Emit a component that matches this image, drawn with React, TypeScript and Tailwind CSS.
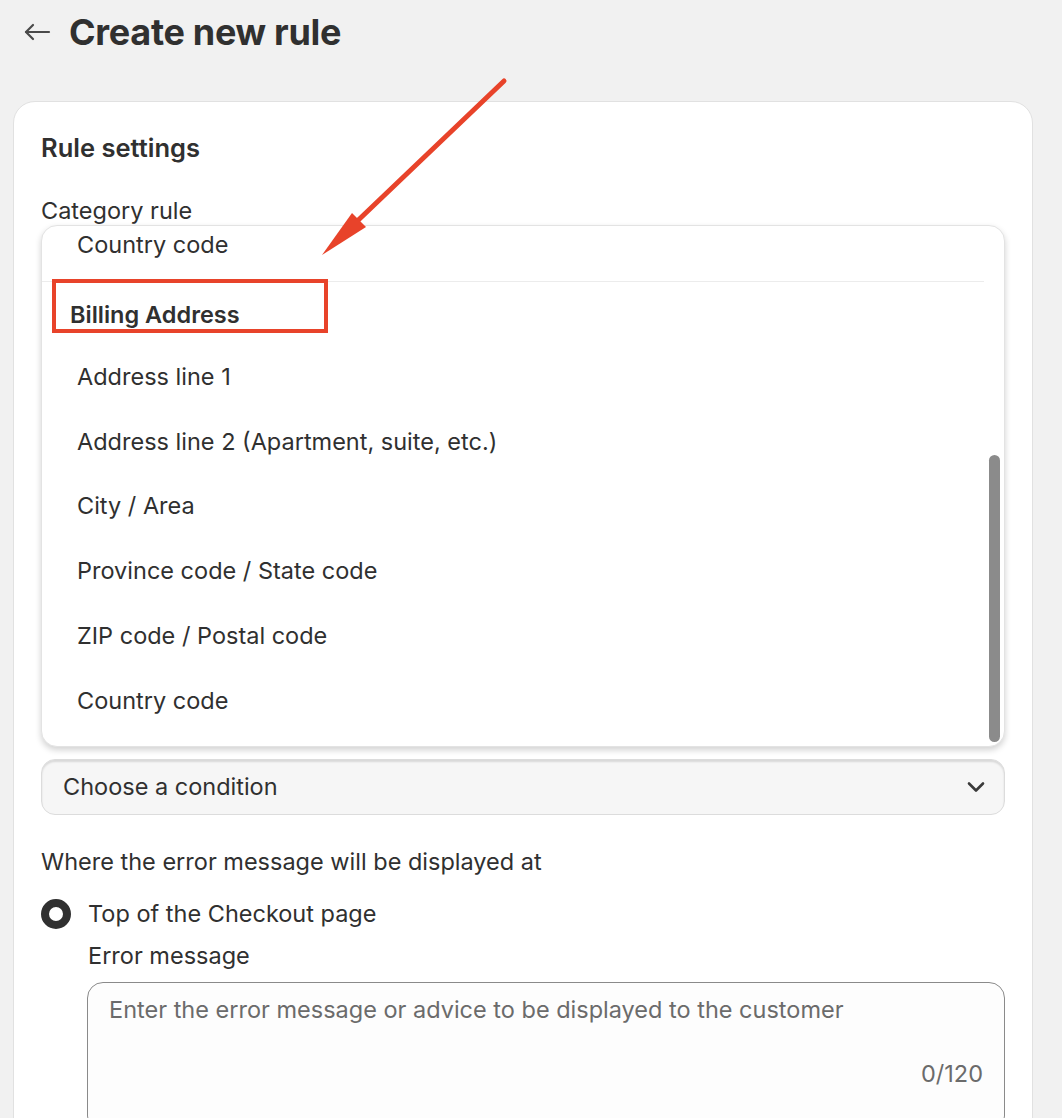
import React from "react";

const items = [
  "Address line 1",
  "Address line 2 (Apartment, suite, etc.)",
  "City / Area",
  "Province code / State code",
  "ZIP code / Postal code",
  "Country code",
];

function BackArrow() {
  return (
    <svg width="28" height="20" viewBox="0 0 28 20" fill="none" stroke="#4a4a4a" strokeWidth="2.2" strokeLinecap="round" strokeLinejoin="round">
      <path d="M26 10H3" />
      <path d="M10 3L3 10l7 7" />
    </svg>
  );
}

function Chevron() {
  return (
    <svg width="20" height="12" viewBox="0 0 20 12" fill="none" stroke="#3a3a3a" strokeWidth="2.6" strokeLinecap="round" strokeLinejoin="round">
      <path d="M3 2.5l7 7 7-7" />
    </svg>
  );
}

export default function App() {
  return (
    <div
      className="relative min-h-[1118px] w-[1062px] overflow-hidden bg-[#f1f1f1] text-[#303030]"
      style={{ fontFamily: "Inter, 'Noto Sans', sans-serif" }}
    >
      <div className="flex h-[64px] items-center gap-[18px] pl-[23px]">
        <BackArrow />
        <h1 className="text-[36px] font-bold leading-none tracking-[-0.3px]">Create new rule</h1>
      </div>

      <div className="ml-[13px] mt-[37px] w-[1020px] rounded-t-[22px] border border-[#e1e1e1] bg-white px-[27px] pt-[27px] pb-[40px]">
        <h2 className="h-[35px] text-[25.5px] font-semibold leading-[37px]">Rule settings</h2>
        <div className="mt-[33px] text-[23.5px] leading-[28px]">Category rule</div>

        <div className="relative h-[522px] overflow-hidden rounded-[16px] border border-[#e3e3e3] bg-white text-[23.5px] shadow-[0_3px_6px_rgba(0,0,0,0.18)]">
          <div className="mt-[-14px]">
            <div className="flex h-[65px] items-center pl-[35px]">Country code</div>
            <div className="mr-[20px] mt-[4px] h-px bg-[#ececec]" />
            <div className="flex h-[62px] items-center pl-[28px] pt-[4px] font-semibold">Billing Address</div>
            {items.map((t) => (
              <div key={t} className="flex h-[64.8px] items-center pl-[35px]">
                {t}
              </div>
            ))}
          </div>
          <div className="absolute right-[4px] top-[229px] h-[287px] w-[11px] rounded-full bg-[#8b8b8b]" />
        </div>

        <div className="mt-[12px] flex h-[56px] items-center justify-between rounded-[14px] border border-[#dcdcdc] bg-[#f6f6f6] pl-[21px] pr-[18px] shadow-[inset_0_2px_2px_rgba(0,0,0,0.12)]">
          <span className="text-[23.5px]">Choose a condition</span>
          <Chevron />
        </div>

        <div className="mt-[32px] text-[23.5px] leading-[30px]">Where the error message will be displayed at</div>

        <div className="mt-[22px] flex h-[30px] items-center gap-[17px]">
          <div className="h-[30px] w-[30px] rounded-full border-[8px] border-[#303030] bg-white" />
          <span className="text-[23.5px]">Top of the Checkout page</span>
        </div>

        <div className="ml-[47px] mt-[12px] text-[23.5px] leading-[30px]">Error message</div>

        <div className="ml-[46px] mt-[11px] flex h-[150px] flex-col justify-between rounded-[16px] border border-[#8a8a8a] bg-[#fdfdfd] px-[21px] pt-[11px] pb-[42px] text-[23.5px] text-[#6b6b6b]">
          <span className="leading-[32px]">
            Enter the error message or advice to be displayed to the customer
          </span>
          <span className="self-end leading-[30px]">0/120</span>
        </div>
      </div>

      <div className="pointer-events-none absolute left-[52px] top-[279px] h-[54px] w-[276px] border-[4px] border-[#e8432a]" />
      <svg className="pointer-events-none absolute left-0 top-0" width="1062" height="1118">
        <line x1="504" y1="81" x2="350" y2="228" stroke="#e8432a" strokeWidth="5" strokeLinecap="round" />
        <polygon points="322,255 352,213 366,227" fill="#e8432a" />
      </svg>
    </div>
  );
}
